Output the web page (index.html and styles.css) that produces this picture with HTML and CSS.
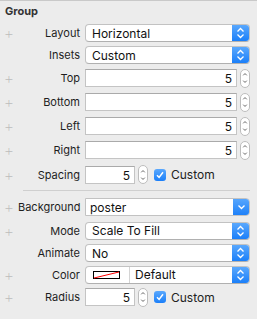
FILE: index.html
```html
<!DOCTYPE html>
<html lang="en">
<head>
  <meta charset="UTF-8">
  <title>Group Inspector</title>
  <link rel="stylesheet" href="styles.css">
</head>
<body>
  <div class="panel">
    <div class="header">Group</div>

    <div class="row r-layout">
      <span class="plus">+</span><span class="label">Layout</span>
      <div class="popup"><span class="val">Horizontal</span><span class="btn"><svg width="9" height="12" viewBox="0 0 9 12"><path d="M1.5 4.5 L4.5 1.5 L7.5 4.5 M1.5 7.5 L4.5 10.5 L7.5 7.5" fill="none" stroke="#fff" stroke-width="1.3"/></svg></span></div>
    </div>
    <div class="row r-insets">
      <span class="plus"></span><span class="label">Insets</span>
      <div class="popup"><span class="val">Custom</span><span class="btn"><svg width="9" height="12" viewBox="0 0 9 12"><path d="M1.5 4.5 L4.5 1.5 L7.5 4.5 M1.5 7.5 L4.5 10.5 L7.5 7.5" fill="none" stroke="#fff" stroke-width="1.3"/></svg></span></div>
    </div>
    <div class="row r-num">
      <span class="plus">+</span><span class="label">Top</span>
      <div class="field wide">5</div>
      <span class="stepper"><svg width="9" height="18" viewBox="0 0 9 18"><path d="M2.5 6 L4.5 4 L6.5 6 M2.5 12 L4.5 14 L6.5 12" fill="none" stroke="#555" stroke-width="1"/></svg></span>
    </div>
    <div class="row r-num">
      <span class="plus">+</span><span class="label">Bottom</span>
      <div class="field wide">5</div>
      <span class="stepper"><svg width="9" height="18" viewBox="0 0 9 18"><path d="M2.5 6 L4.5 4 L6.5 6 M2.5 12 L4.5 14 L6.5 12" fill="none" stroke="#555" stroke-width="1"/></svg></span>
    </div>
    <div class="row r-num">
      <span class="plus">+</span><span class="label">Left</span>
      <div class="field wide">5</div>
      <span class="stepper"><svg width="9" height="18" viewBox="0 0 9 18"><path d="M2.5 6 L4.5 4 L6.5 6 M2.5 12 L4.5 14 L6.5 12" fill="none" stroke="#555" stroke-width="1"/></svg></span>
    </div>
    <div class="row r-num">
      <span class="plus">+</span><span class="label">Right</span>
      <div class="field wide">5</div>
      <span class="stepper"><svg width="9" height="18" viewBox="0 0 9 18"><path d="M2.5 6 L4.5 4 L6.5 6 M2.5 12 L4.5 14 L6.5 12" fill="none" stroke="#555" stroke-width="1"/></svg></span>
    </div>
    <div class="row r-spacing">
      <span class="plus">+</span><span class="label">Spacing</span>
      <div class="field short">5</div>
      <span class="stepper"><svg width="9" height="18" viewBox="0 0 9 18"><path d="M2.5 6 L4.5 4 L6.5 6 M2.5 12 L4.5 14 L6.5 12" fill="none" stroke="#555" stroke-width="1"/></svg></span>
      <span class="check"><svg width="8" height="8" viewBox="0 0 8 8"><path d="M1 4.2 L3.1 6.4 L7 1.2" fill="none" stroke="#fff" stroke-width="1.5"/></svg></span>
      <span class="check-label">Custom</span>
    </div>

    <div class="sep"></div>

    <div class="row r-bg">
      <span class="plus">+</span><span class="label">Background</span>
      <div class="combo"><span class="val">poster</span><span class="btn"><svg width="9" height="8" viewBox="0 0 9 8"><path d="M1.5 2.5 L4.5 5.5 L7.5 2.5" fill="none" stroke="#fff" stroke-width="1.3"/></svg></span></div>
    </div>
    <div class="row r-mode">
      <span class="plus">+</span><span class="label">Mode</span>
      <div class="popup"><span class="val">Scale To Fill</span><span class="btn"><svg width="9" height="12" viewBox="0 0 9 12"><path d="M1.5 4.5 L4.5 1.5 L7.5 4.5 M1.5 7.5 L4.5 10.5 L7.5 7.5" fill="none" stroke="#fff" stroke-width="1.3"/></svg></span></div>
    </div>
    <div class="row r-animate">
      <span class="plus"></span><span class="label">Animate</span>
      <div class="popup"><span class="val">No</span><span class="btn"><svg width="9" height="12" viewBox="0 0 9 12"><path d="M1.5 4.5 L4.5 1.5 L7.5 4.5 M1.5 7.5 L4.5 10.5 L7.5 7.5" fill="none" stroke="#fff" stroke-width="1.3"/></svg></span></div>
    </div>
    <div class="row r-color">
      <span class="plus">+</span><span class="label">Color</span>
      <div class="popup">
        <span class="well"><svg width="27" height="8" viewBox="0 0 27 8"><rect x="0.5" y="0.5" width="26" height="7" fill="#fff" stroke="#000"/><path d="M1 7 L26 1" stroke="#f00" stroke-width="1"/></svg></span>
        <span class="val">Default</span>
        <span class="btn"><svg width="9" height="12" viewBox="0 0 9 12"><path d="M1.5 4.5 L4.5 1.5 L7.5 4.5 M1.5 7.5 L4.5 10.5 L7.5 7.5" fill="none" stroke="#fff" stroke-width="1.3"/></svg></span>
      </div>
    </div>
    <div class="row r-radius">
      <span class="plus">+</span><span class="label">Radius</span>
      <div class="field short">5</div>
      <span class="stepper"><svg width="9" height="18" viewBox="0 0 9 18"><path d="M2.5 6 L4.5 4 L6.5 6 M2.5 12 L4.5 14 L6.5 12" fill="none" stroke="#555" stroke-width="1"/></svg></span>
      <span class="check"><svg width="8" height="8" viewBox="0 0 8 8"><path d="M1 4.2 L3.1 6.4 L7 1.2" fill="none" stroke="#fff" stroke-width="1.5"/></svg></span>
      <span class="check-label">Custom</span>
    </div>
  </div>
</body>
</html>
```

FILE: styles.css
```css
/* reset */
* { margin:0; padding:0; box-sizing:border-box }
html, body { height:100%; }
body {
  background:#ececec;
  font-family:Inter, "Liberation Sans", sans-serif;
  font-size:11px;
  color:#222;
}

/* inspector panel */
.panel {
  border-top:1px solid #c9c9c9;
  padding:0 7px 0 0;
}
.header {
  height:21px;
  padding:3px 0 0 5px;
  font-weight:700;
  font-size:11px;
  color:#333;
}

/* rows */
.row {
  display:flex; align-items:center;
}
.r-layout  { height:22px; }
.r-insets  { height:22px; }
.r-num     { height:24px; }
.r-spacing { height:25px; }
.r-bg      { height:24px; }
.r-mode    { height:23px; }
.r-animate { height:22px; }
.r-color   { height:21px; }
.r-radius  { height:24px; }

.plus {
  width:18px; flex:none;
  text-align:center;
  color:#bcbcbc; font-size:16px; font-weight:200;
  line-height:1;
}
.label {
  width:62px; flex:none;
  text-align:right;
  margin-right:5px;
  color:#1e1e1e;
}

/* popup button */
.popup {
  flex:1;
  height:18px;
  display:flex; align-items:center;
  background:#fff;
  border:1px solid #c2c2c2; border-bottom-color:#b0b0b0;
  border-radius:4px;
  overflow:hidden;
  font-size:12px; color:#111;
}
.popup .val { flex:1; padding-left:6px; }
.btn {
  width:17px; height:100%;
  display:flex; align-items:center; justify-content:center;
  background:linear-gradient(#5aa8fd,#1b7ff9);
}

/* combo box */
.combo {
  flex:1;
  height:18px;
  display:flex; align-items:center;
  background:#fff;
  border:1px solid #c2c2c2;
  border-radius:0 4px 4px 0;
  overflow:hidden;
  font-size:12px; color:#111;
}
.combo .val { flex:1; padding-left:4px; }
.combo .btn { margin:-1px -1px -1px 0; height:18px; border-radius:0 4px 4px 0; }

/* color well */
.well {
  height:100%;
  display:flex; align-items:center;
  padding:0 9px 0 7px;
  border-right:1px solid #d4d4d4;
}
.r-color .popup .val { padding-left:5px; }

/* number field */
.field {
  height:18px;
  background:#fff;
  border:1px solid #c4c4c4; border-top-color:#aaa;
  text-align:right;
  padding:1px 4px 0 0;
  font-size:12px; color:#111;
}
.field.wide { flex:1; }
.field.short { width:50px; flex:none; }

.stepper {
  width:10px; height:19px;
  margin-left:3px;
  display:flex; align-items:center; justify-content:center;
  background:#fff;
  border:1px solid #bdbdbd;
  border-radius:5px;
}

/* checkbox */
.check {
  width:12px; height:12px;
  margin-left:6px;
  border-radius:3px;
  background:linear-gradient(#5aa8fd,#1b7ff9);
  display:flex; align-items:center; justify-content:center;
}
.check-label { margin-left:5px; font-size:12px; color:#222; }

/* separator */
.sep {
  height:1px;
  margin:3px 0 4px 23px;
  background:#cfcfcf;
}
```
